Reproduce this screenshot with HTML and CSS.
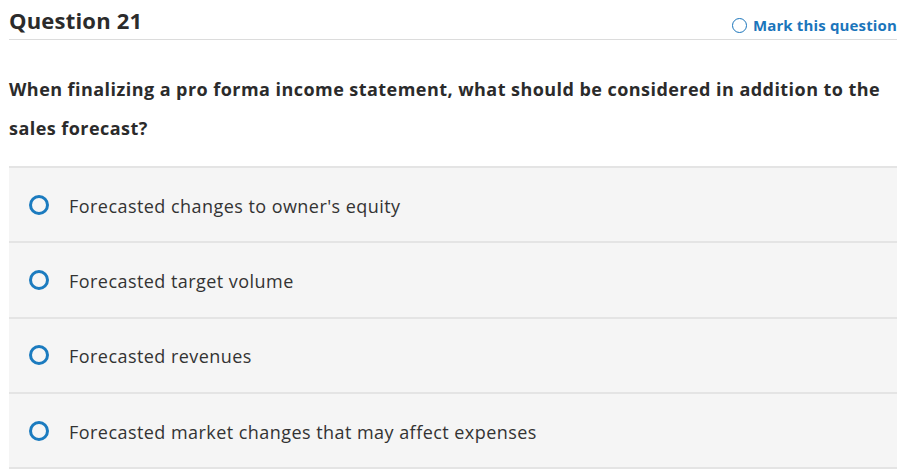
FILE: index.html
```html
<!DOCTYPE html>
<html>
<head>
<meta charset="utf-8">
<link rel="stylesheet" href="styles.css">
</head>
<body>
<div class="page">
  <div class="header">
    <h1 class="title">Question 21</h1>
    <a class="mark"><span class="mark-circle"></span>Mark this question</a>
  </div>
  <p class="prompt">When finalizing a pro forma income statement, what should be considered in addition to the sales forecast?</p>
  <ul class="options">
    <li class="option"><span class="radio"></span><span class="label">Forecasted changes to owner's equity</span></li>
    <li class="option"><span class="radio"></span><span class="label">Forecasted target volume</span></li>
    <li class="option"><span class="radio"></span><span class="label">Forecasted revenues</span></li>
    <li class="option"><span class="radio"></span><span class="label">Forecasted market changes that may affect expenses</span></li>
  </ul>
</div>
</body>
</html>
```
FILE: styles.css
```css
html, body { margin: 0; padding: 0; background: #fff; }
body { font-family: "Open Sans", "Lato", sans-serif; color: #333; }
.page { padding: 0 14px 0 9px; }
.header {
  display: flex; justify-content: space-between; align-items: flex-end;
  border-bottom: 1px solid #dcdcdc; height: 40px; box-sizing: border-box;
  padding-bottom: 6px;
}
.title { margin: 0; font-size: 22px; font-weight: 700; color: #2b2b2b; line-height: 26px; letter-spacing: 0.2px; }
.mark { display: flex; align-items: center; gap: 6px; color: #1b75bb; font-size: 15px; font-weight: 700; line-height: 20px; margin-bottom: -2px; letter-spacing: 0.15px; }
.mark-circle { width: 13px; height: 13px; border: 1.5px solid #1b75bb; border-radius: 50%; }
.prompt { margin: 30px 0 0; font-size: 18px; font-weight: 700; line-height: 39px; color: #2b2b2b; letter-spacing: 0.45px; }
.options { list-style: none; margin: 18px 0 0; padding: 0; border-top: 2px solid #e4e4e4; }
.option {
  display: flex; align-items: center; height: 73.3px; background: #f5f5f5;
  border-bottom: 2px solid #e4e4e4; padding-left: 20px;
}
.radio { width: 14px; height: 14px; border: 3px solid #1b7bbf; border-radius: 50%; flex: none; }
.label { margin-left: 20px; font-size: 18px; color: #333; letter-spacing: 0.45px; padding-top: 2px; }
```
